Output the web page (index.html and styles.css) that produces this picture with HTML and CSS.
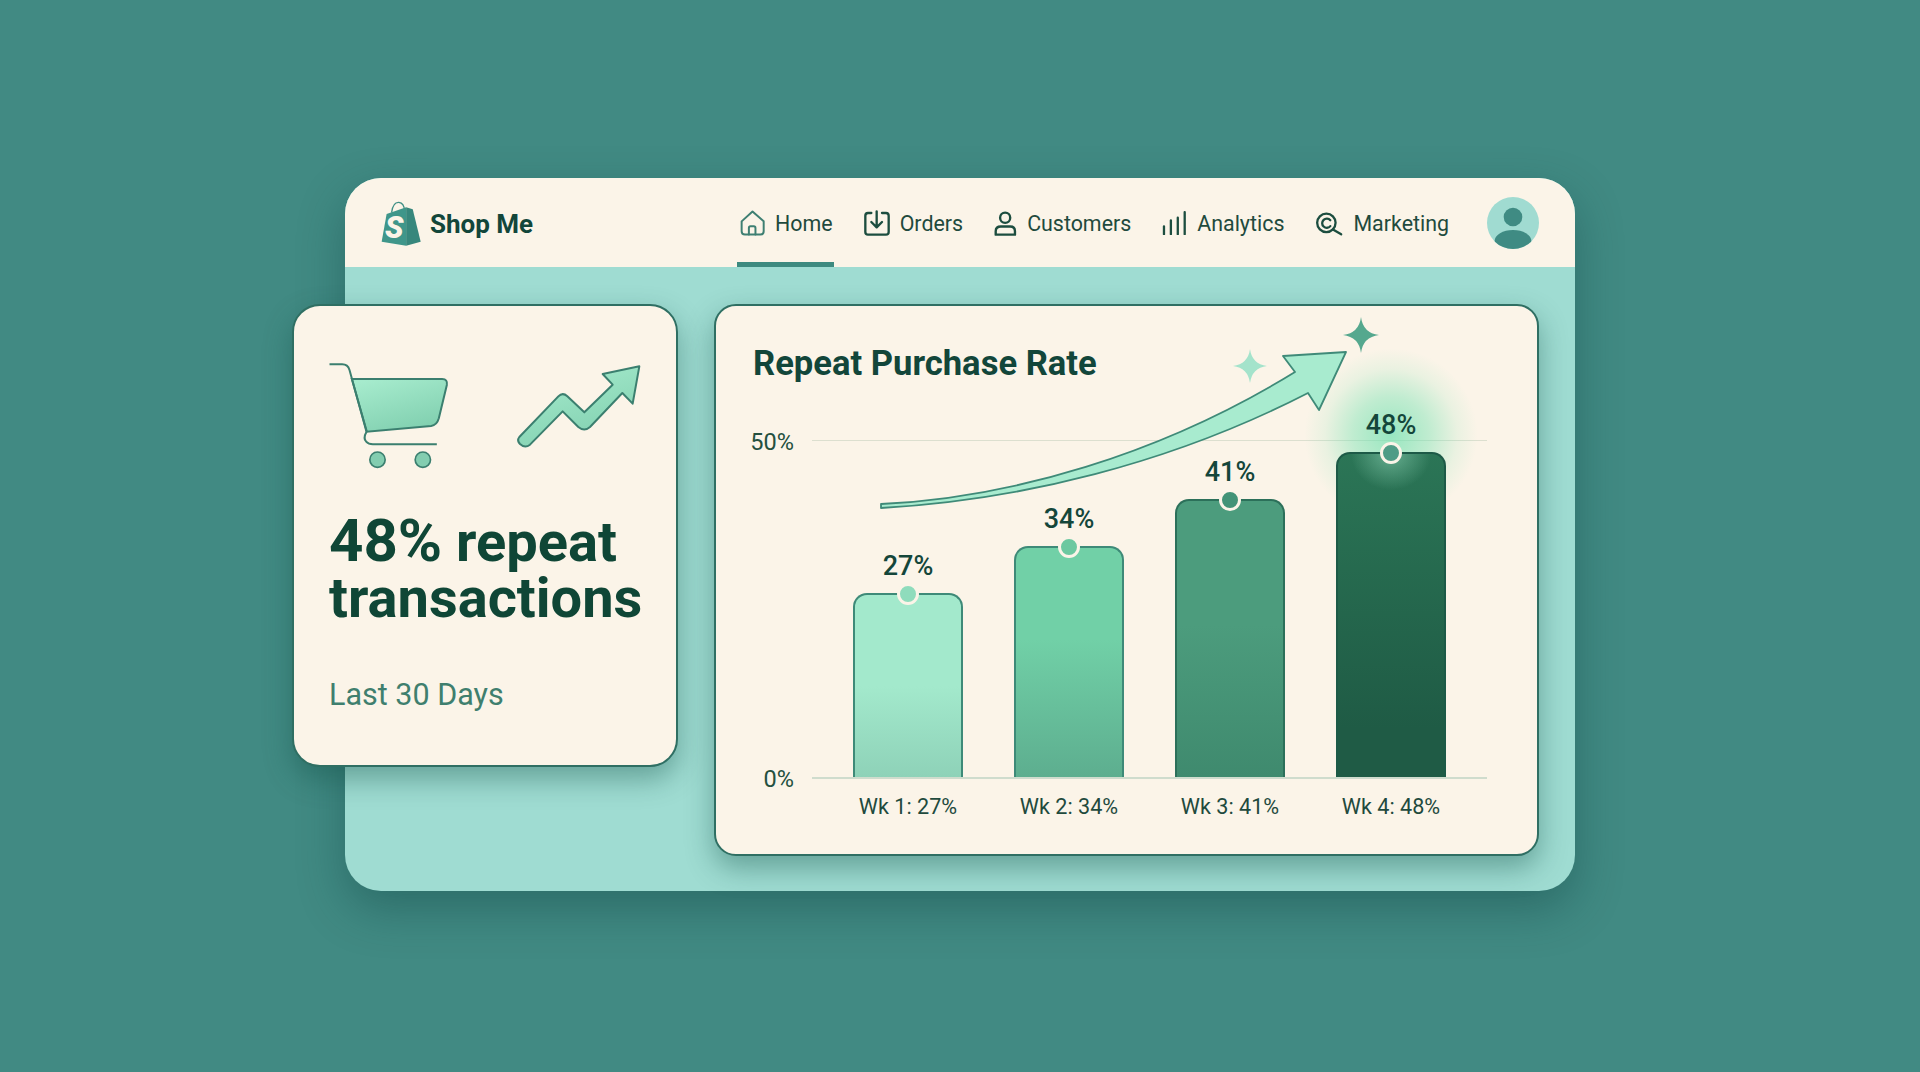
FILE: index.html
```html
<!DOCTYPE html>
<html lang="en">
<head>
    <meta charset="UTF-8">
    <title>Shop Me - Repeat Purchase Rate</title>
    <link rel="stylesheet" href="styles.css">
</head>
<body>
    <div class="app">
        <header class="topbar">
            <div class="logo">
                <svg class="logo-bag" viewBox="40 25 124 140">
                    <path d="M72 62 Q76 30 94 31 Q110 33 111 56" fill="none" stroke="#3f8f85" stroke-width="4"/>
                    <path d="M42 150 L57 66 L116 46 V162 Z" fill="#3f968a"/>
                    <path d="M116 46 L136 52 L160 150 L116 162 Z" fill="#37877c"/>
                    <text x="52" y="140" class="logo-s">S</text>
                </svg>
                <span>Shop Me</span>
            </div>
            <nav class="nav">
                <a class="nav-item active">
                    <svg class="icon teal" width="25" height="26" viewBox="30 46 76 78">
                        <path d="M35 80 L68 50 L102 80 V110 Q102 120 92 120 H45 Q35 120 35 110 Z"/>
                        <path d="M57 120 V100 Q57 95 62 95 H72 Q77 95 77 100 V120"/>
                    </svg>
                    Home
                </a>
                <a class="nav-item">
                    <svg class="icon" width="26" height="26" viewBox="398 46 78 78">
                        <path d="M420 55 H410 Q402 55 402 63 V112 Q402 120 410 120 H464 Q472 120 472 112 V63 Q472 55 464 55 H452"/>
                        <path d="M436 50 V95 M420 82 L436 98 L452 82"/>
                    </svg>
                    Orders
                </a>
                <a class="nav-item">
                    <svg class="icon" width="23" height="25" viewBox="795 50 68 74">
                        <circle cx="828" cy="70" r="15"/>
                        <path d="M800 120 V110 Q800 96 815 96 H843 Q857 96 857 110 V120 Z"/>
                    </svg>
                    Customers
                </a>
                <a class="nav-item">
                    <svg class="icon" width="25" height="24" viewBox="40 62 76 72">
                        <path d="M46 108 V132 M67 90 V132 M88 82 V132 M109 65 V132"/>
                    </svg>
                    Analytics
                </a>
                <a class="nav-item">
                    <svg class="icon" width="28" height="25" viewBox="498 64 84 76">
                        <circle cx="532" cy="100" r="28"/>
                        <path d="M544 92 A14 14 0 1 0 544 110 M552 120 L577 135"/>
                    </svg>
                    Marketing
                </a>
            </nav>
            <svg class="avatar" viewBox="1010 20 156 156">
                <clipPath id="avatar-clip"><circle cx="1088" cy="98" r="78"/></clipPath>
                <circle cx="1088" cy="98" r="78" fill="#a0dbd1"/>
                <circle cx="1088" cy="80" r="28" fill="#3f8b83"/>
                <ellipse cx="1088" cy="152" rx="55" ry="33" fill="#3f8b83" clip-path="url(#avatar-clip)"/>
            </svg>
        </header>

        <main class="content">
            <section class="card summary">
                <div class="summary-icons">
                    <svg class="cart-icon" width="127" height="110" viewBox="20 30 380 330">
                        <defs>
                            <linearGradient id="mint-fill" x1="0.2" y1="0" x2="0.7" y2="1">
                                <stop offset="0" stop-color="#a6ebcd"/>
                                <stop offset="1" stop-color="#80cfaf"/>
                            </linearGradient>
                        </defs>
                        <path d="M97 87 H368 Q385 87 382 105 L358 205 Q352 226 335 228 L142 245 Z" fill="url(#mint-fill)" stroke="#3b7f6f" stroke-width="6"/>
                        <path d="M30 43 H68 Q85 43 90 60 L141 245 Q130 265 140 275 Q147 283 160 283 H352" fill="none" stroke="#3b7f6f" stroke-width="6"/>
                        <circle cx="174" cy="329" r="23" fill="#83cdb0" stroke="#3b7f6f" stroke-width="5"/>
                        <circle cx="310" cy="329" r="23" fill="#83cdb0" stroke="#3b7f6f" stroke-width="5"/>
                    </svg>
                    <svg class="growth-icon" width="127" height="88" viewBox="585 40 381 264">
                        <path d="M598 262 L715 140 Q728 127 742 140 L793 188 L878 105 L848 73 L958 50 L938 162 L907 130 L810 232 Q793 247 775 232 L728 185 L630 285 Q615 297 600 283 Q590 272 598 262 Z" fill="url(#mint-fill)" stroke="#3b7f6f" stroke-width="6" stroke-linejoin="round"/>
                    </svg>
                </div>
                <h2 class="headline"><span class="pct">48%</span> repeat<br>transactions</h2>
                <p class="period">Last 30 Days</p>
            </section>

            <section class="card chart">
                <svg class="trend" viewBox="715 305 823 550">
                    <path d="M881 504 C1010 498 1160 455 1295 372 L1283 356 L1346 352 L1319 410 L1308 393 C1170 464 1020 500 881 508 Z" fill="#a8ebcf" stroke="#3f8a78" stroke-width="1.8" stroke-linejoin="round"/>
                    <path d="M1361 317 Q1363 333 1379 335 Q1363 337 1361 353 Q1359 337 1343 335 Q1359 333 1361 317 Z" fill="#55a88e"/>
                    <path d="M1250 349 Q1252 364 1267 366 Q1252 368 1250 383 Q1248 368 1233 366 Q1248 364 1250 349 Z" fill="#a4e3cb"/>
                </svg>
                <h2 class="chart-title">Repeat Purchase Rate</h2>
                <div class="chart-grid">
                    <div class="y-axis">
                        <span>50%</span>
                        <span>0%</span>
                    </div>
                    <div class="plot">
                        <div class="bar-col">
                            <span class="bar-value">27%</span>
                            <div class="bar bar-1" style="height: 184px"><i class="dot"></i></div>
                        </div>
                        <div class="bar-col">
                            <span class="bar-value">34%</span>
                            <div class="bar bar-2" style="height: 231px"><i class="dot"></i></div>
                        </div>
                        <div class="bar-col">
                            <span class="bar-value">41%</span>
                            <div class="bar bar-3" style="height: 278px"><i class="dot"></i></div>
                        </div>
                        <div class="bar-col hot">
                            <span class="bar-value">48%</span>
                            <div class="bar bar-4" style="height: 325px"><i class="dot"></i></div>
                        </div>
                    </div>
                    <div class="x-axis">
                        <span>Wk 1: 27%</span>
                        <span>Wk 2: 34%</span>
                        <span>Wk 3: 41%</span>
                        <span>Wk 4: 48%</span>
                    </div>
                </div>
            </section>
        </main>
    </div>
</body>
</html>
```

FILE: styles.css
```css
* {
    box-sizing: border-box;
}
body {
    margin: 0;
    height: 1072px;
    padding-top: 178px;
    overflow: hidden;
    background-color: #418a83;
    font-family: Roboto, Arial, sans-serif;
    color: #14463a;
    display: flex;
    justify-content: center;
    align-items: flex-start;
}
.app {
    width: 1230px;
    height: 713px;
    background: #9fdcd2;
    border-radius: 36px;
    box-shadow: 0 18px 46px rgba(10, 60, 60, 0.38);
}
.topbar {
    height: 89px;
    padding: 0 36px;
    background: #fbf4e8;
    border-radius: 36px 36px 0 0;
    display: flex;
    align-items: center;
}
.logo {
    display: flex;
    align-items: center;
    gap: 8px;
    padding-top: 2px;
    font-size: 26px;
    font-weight: 700;
    color: #12463a;
}
.logo-bag {
    width: 41px;
    height: 47px;
}
.logo-s {
    font-family: Roboto, Arial, sans-serif;
    font-size: 92px;
    font-weight: 900;
    font-style: italic;
    fill: #fbf4e8;
}
.nav {
    margin-left: auto;
    margin-right: 37px;
    display: flex;
    gap: 29px;
    height: 100%;
}
.nav-item {
    display: flex;
    align-items: center;
    gap: 10px;
    font-size: 21.4px;
    color: #1f4a3d;
    border-bottom: 5px solid transparent;
    padding: 6px 1px 0;
}
.nav-item.active {
    padding-left: 3px;
    border-bottom-color: #3d8a7f;
}
.icon {
    fill: none;
    stroke: #1c4d3f;
    stroke-width: 7;
    stroke-linecap: round;
    stroke-linejoin: round;
}
.icon.teal {
    stroke: #3e7f72;
    stroke-width: 6;
}
.avatar {
    width: 52px;
    height: 52px;
}
.content {
    padding: 37px 36px 36px 0;
    display: flex;
    align-items: flex-start;
    gap: 36px;
}
.card {
    background: #fbf4e8;
    border: 2px solid #2f6f63;
    box-shadow: 0 12px 28px rgba(20, 80, 72, 0.42);
}
.summary {
    width: 386px;
    height: 463px;
    margin-left: -53px;
    padding: 54px 35px 0;
    border-radius: 28px;
}
.summary-icons {
    display: flex;
    justify-content: space-between;
    align-items: flex-start;
}
.cart-icon {
    margin-left: -3px;
}
.growth-icon {
    margin-top: 3px;
    margin-right: -1px;
}
.headline {
    margin: 43px 0 0;
    font-size: 56px;
    line-height: 56px;
    font-weight: 700;
    color: #0f4636;
}
.pct {
    font-size: 60px;
}
.period {
    margin: 51px 0 0;
    font-size: 30.5px;
    line-height: 36px;
    color: #3f7f6e;
}
.chart {
    position: relative;
    width: 825px;
    height: 552px;
    padding: 37px 50px 0 37px;
    border-radius: 22px;
}
.trend {
    position: absolute;
    left: -1px;
    top: -1px;
    width: 823px;
    height: 550px;
    z-index: 3;
    pointer-events: none;
}
.chart-title {
    margin: 0 0 57px;
    font-size: 34.6px;
    line-height: 40px;
    font-weight: 700;
    color: #12463a;
}
.chart-grid {
    display: grid;
    grid-template-columns: 41px 1fr;
    column-gap: 18px;
}
.y-axis {
    margin: -12px 0 -14px;
    display: flex;
    flex-direction: column;
    justify-content: space-between;
    align-items: flex-end;
    white-space: nowrap;
    font-size: 23.5px;
    line-height: 28px;
    color: #24503f;
}
.plot {
    height: 339px;
    padding: 0 41px;
    border-top: 1px solid #dcdfcf;
    border-bottom: 2px solid #cfdccd;
    display: flex;
    justify-content: space-between;
    align-items: flex-end;
}
.bar-col {
    position: relative;
    width: 110px;
    display: flex;
    flex-direction: column;
    align-items: center;
}
.bar-value {
    position: relative;
    z-index: 4;
    margin-bottom: 12px;
    font-size: 27px;
    line-height: 30px;
    font-weight: 500;
    color: #14463a;
}
.hot::before {
    content: "";
    position: absolute;
    left: -35px;
    top: -65px;
    width: 180px;
    height: 180px;
    background: radial-gradient(circle, rgba(110, 225, 175, 0.7) 0, rgba(110, 225, 175, 0.42) 30%, rgba(110, 225, 175, 0.12) 52%, rgba(110, 225, 175, 0) 68%);
}
.bar {
    position: relative;
    width: 110px;
    border: 2px solid #3e8a78;
    border-bottom: none;
    border-radius: 14px 14px 0 0;
}
.bar-1 {
    background: linear-gradient(#a3e9cc 50%, #8ed2b8);
}
.bar-2 {
    background: linear-gradient(#71d0a7 40%, #5dae8f);
}
.bar-3 {
    background: linear-gradient(#4c9c7d 45%, #3f8a6e);
    border-color: #2c705a;
}
.bar-4 {
    background: radial-gradient(ellipse 40px 36px at 50% 0, rgba(140, 210, 180, 0.6), rgba(140, 210, 180, 0)), linear-gradient(#2b7556, #1f5b45 85%);
    border-color: #1d5a47;
}
.dot {
    position: absolute;
    left: 50%;
    top: -12px;
    width: 22px;
    height: 22px;
    margin-left: -11px;
    border-radius: 50%;
    border: 3px solid #fbf4e8;
    background: #8fdcbc;
}
.bar-2 .dot {
    background: #6cc8a0;
}
.bar-3 .dot {
    background: #429377;
}
.bar-4 .dot {
    background: #4f9c86;
}
.x-axis {
    grid-column: 2;
    margin-top: 13px;
    padding: 0 41px;
    display: flex;
    justify-content: space-between;
    font-size: 21.6px;
    line-height: 30px;
    color: #1f4a3d;
}
.x-axis span {
    width: 110px;
    text-align: center;
    white-space: nowrap;
}
```
